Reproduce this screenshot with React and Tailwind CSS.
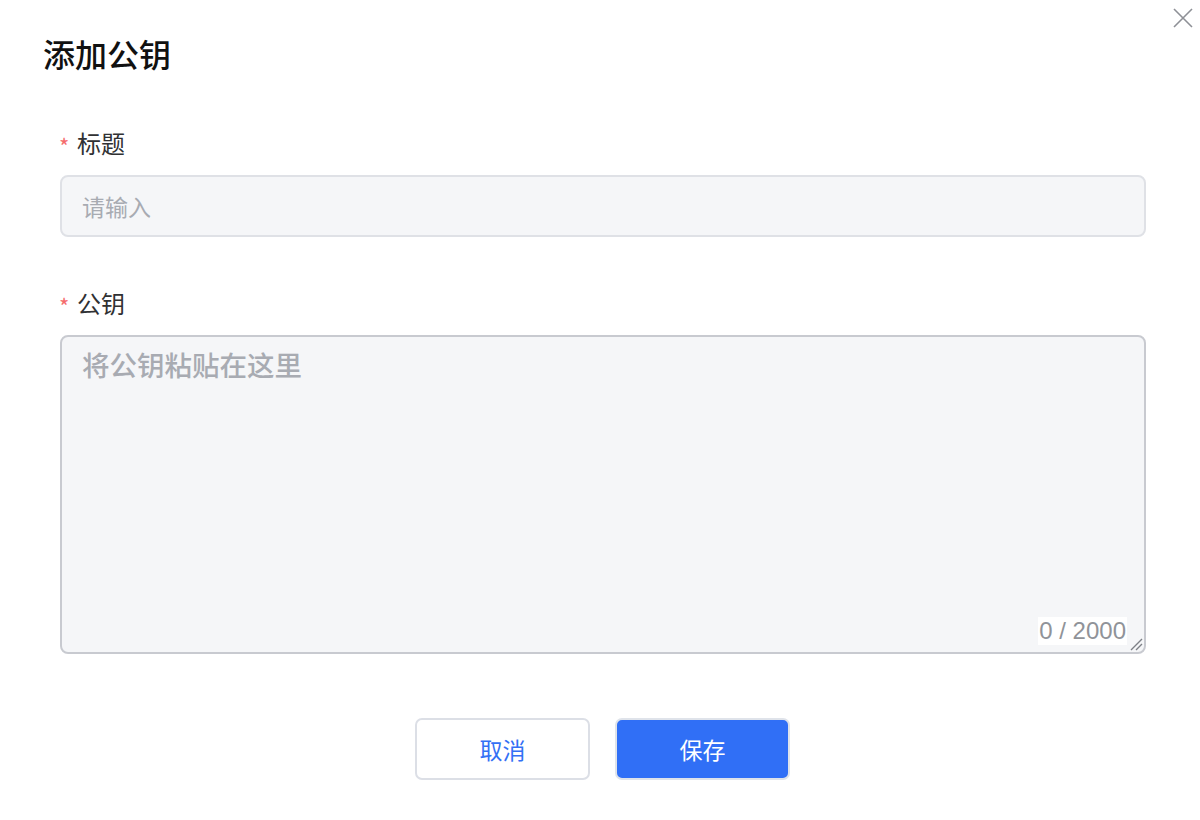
import React, { useState } from "react";

function Field({ label, children }) {
    return (
        <div className="flex flex-col">
            <div className="flex items-center h-[24px] text-[24px] leading-[24px] text-[#303133]">
                <span className="text-[#f56c6c] text-[22px] w-[18px] -ml-[1px] leading-none pt-[3px]">*</span>
                <span>{label}</span>
            </div>
            {children}
        </div>
    );
}

export default function App() {
    const [title, setTitle] = useState("");
    const [key, setKey] = useState("");

    return (
        <div
            className="relative w-[1200px] h-[820px] bg-white overflow-hidden"
            style={{ fontFamily: '"Noto Sans CJK SC", "Noto Sans", sans-serif' }}
        >
            <button className="absolute top-[7px] right-[6px] w-[22px] h-[22px] flex items-center justify-center">
                <svg width="20" height="20" viewBox="0 0 20 20" fill="none" stroke="#8e9096" strokeWidth="1.6">
                    <path d="M1 1 L19 19 M19 1 L1 19" />
                </svg>
            </button>

            <h2 className="pt-[38px] pl-[43px] text-[32px] leading-[31px] font-medium text-[#111]">添加公钥</h2>

            <div className="mt-[62px] ml-[60px] w-[1086px] flex flex-col">
                <Field label="标题">
                    <input
                        value={title}
                        onChange={(e) => setTitle(e.target.value)}
                        placeholder="请输入"
                        className="mt-[20px] h-[62px] w-full rounded-[8px] border-2 border-[#dfe1e6] bg-[#f5f6f8] px-[20px] text-[23px] text-[#303133] placeholder:text-[#a8abb2] outline-none"
                    />
                </Field>

                <div className="mt-[54px]">
                    <Field label="公钥">
                        <div className="relative mt-[20px] h-[319px] w-full rounded-[8px] border-2 border-[#c8cad0] bg-[#f5f6f8]">
                            <textarea
                                value={key}
                                onChange={(e) => setKey(e.target.value)}
                                placeholder="将公钥粘贴在这里"
                                className="w-full h-full resize-none bg-transparent px-[20px] pt-[8px] text-[27.5px] leading-[38px] font-medium text-[#303133] placeholder:text-[#a8abb2] outline-none"
                            />
                            <span
                                className="absolute right-[17px] bottom-[7px] bg-white px-[1px] text-[24px] leading-[28px] text-[#909399]"
                                style={{ fontFamily: '"Liberation Sans", Arial, sans-serif' }}
                            >
                                {key.length} / 2000
                            </span>
                            <svg className="absolute right-[1px] bottom-[1px]" width="14" height="14" viewBox="0 0 14 14" fill="none" stroke="#7d8087" strokeWidth="1.4">
                                <path d="M2 13 L13 2 M7 13 L13 7" />
                            </svg>
                        </div>
                    </Field>
                </div>
            </div>

            <div className="mt-[64px] flex justify-center gap-[25px] pl-[5px]">
                <button className="w-[175px] h-[62px] rounded-[7px] border-2 border-[#dcdfe6] bg-white text-[23px] text-[#3370f5]">
                    取消
                </button>
                <button className="w-[175px] h-[62px] rounded-[7px] border-2 border-[#dfe3ea] bg-[#306ff6] text-[23px] text-white">
                    保存
                </button>
            </div>
        </div>
    );
}
